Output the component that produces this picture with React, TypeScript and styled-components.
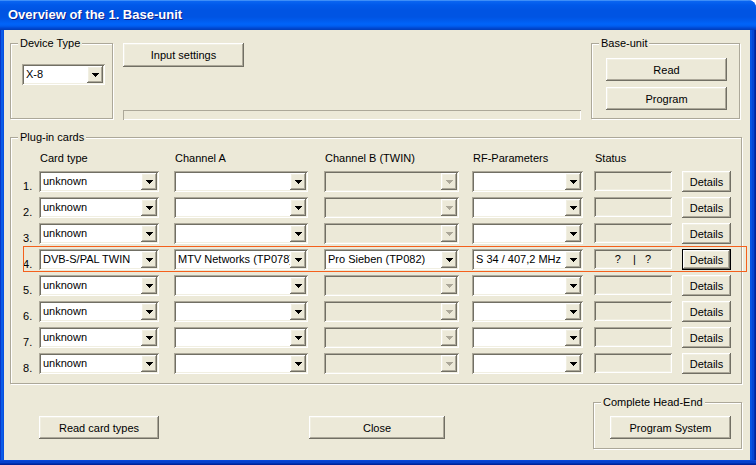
import styled, { createGlobalStyle, css } from "styled-components";

const FACE = "#ECE9D8";
const LIGHT = "#F1EFE2";
const SHADOW = "#ACA899";
const DARK = "#716F64";

const GlobalStyle = createGlobalStyle`
  html, body {
    margin: 0;
    padding: 0;
    background: #ffffff;
  }
  body {
    font-family: "Liberation Sans", Arial, sans-serif;
    font-size: 11px;
    color: #000;
  }
  * {
    box-sizing: border-box;
  }
`;

const raised = css`
  box-shadow: inset -1px -1px ${DARK}, inset 1px 1px #fff,
    inset -2px -2px ${SHADOW}, inset 2px 2px ${LIGHT};
`;

const sunken = css`
  box-shadow: inset 1px 1px ${SHADOW}, inset -1px -1px #fff,
    inset 2px 2px ${DARK}, inset -2px -2px ${LIGHT};
`;

const Window = styled.div`
  width: 756px;
  height: 465px;
  display: flex;
  flex-direction: column;
  overflow: hidden;
  border-top-right-radius: 8px;
  background: #0650e0;
`;

const TitleBar = styled.div`
  height: 30px;
  flex: none;
  display: flex;
  align-items: center;
  padding: 0 0 1px 8px;
  color: #fff;
  font-size: 13px;
  font-weight: bold;
  text-shadow: 1px 1px #0a1e8c;
  background: linear-gradient(
    to bottom,
    #3d8ef8 0px,
    #3d8ef8 1px,
    #0a66f2 1px,
    #0059ea 5px,
    #0054e3 10px,
    #0054e3 17px,
    #005aec 20px,
    #0064fa 24px,
    #005ef0 26px,
    #0049d4 28px,
    #003db8 30px
  );
`;

const FrameBody = styled.div`
  height: 430px;
  flex: none;
  display: flex;
`;

const LeftEdge = styled.div`
  flex: none;
  width: 4px;
  background: linear-gradient(to right, #0838c8 0 1px, #0a5ce8 1px 3px, #0650e0 3px);
`;

const RightEdge = styled.div`
  flex: none;
  width: 6px;
  background: linear-gradient(
    to right,
    #0652e2 0 2px,
    #0444d4 2px 4px,
    #0030b0 4px 5px,
    #00229a 5px
  );
`;

const BottomEdge = styled.div`
  flex: none;
  height: 5px;
  background: linear-gradient(
    to bottom,
    #0847d8 0 1px,
    #0640cc 1px 3px,
    #0030b0 3px 4px,
    #00229a 4px
  );
`;

const Client = styled.main`
  flex: none;
  width: 746px;
  background: ${FACE};
  display: flex;
  flex-direction: column;
  padding: 13px 8px 0 6px;
`;

const TopRow = styled.div`
  display: flex;
  gap: 10px;
  height: 77px;
`;

const GroupBox = styled.section<{ $width?: number; $height?: number }>`
  position: relative;
  flex: none;
  width: ${(p) => (p.$width ? `${p.$width - 1}px` : "auto")};
  height: ${(p) => (p.$height ? `${p.$height - 1}px` : "auto")};
  border: 1px solid ${SHADOW};
  box-shadow: inset 1px 1px #fff, 1px 1px #fff;
`;

const GroupCaption = styled.span`
  position: absolute;
  top: -7px;
  left: 7px;
  padding: 0 2px;
  line-height: 13px;
  background: ${FACE};
  white-space: nowrap;
`;

const DeviceGroup = styled(GroupBox)`
  padding: 20px 0 0 11px;
`;

const MiddleColumn = styled.div`
  flex: none;
  width: 458px;
  display: flex;
  flex-direction: column;
  justify-content: space-between;
`;

const ProgressField = styled.div`
  height: 10px;
  box-shadow: inset 1px 1px ${SHADOW}, inset -1px -1px #fff;
`;

const ButtonStack = styled(GroupBox)`
  display: flex;
  flex-direction: column;
  gap: 6px;
  padding: 14px 0 0 14px;
`;

const Button = styled.button<{ $width: number; $height?: number; $default?: boolean }>`
  flex: none;
  width: ${(p) => p.$width}px;
  height: ${(p) => p.$height ?? 23}px;
  padding: 0;
  border: none;
  background: ${FACE};
  font: inherit;
  color: #000;
  text-align: center;
  ${(p) =>
    p.$default
      ? css`
          box-shadow: inset 0 0 0 1px #000, inset -2px -2px ${DARK},
            inset 2px 2px #fff, inset -3px -3px ${SHADOW}, inset 3px 3px ${LIGHT};
        `
      : raised}
`;

const PluginGroup = styled(GroupBox)`
  margin-top: 17px;
  height: 247px;
  padding: 14px 0 0 12px;
  display: flex;
  flex-direction: column;
`;

const HeaderRow = styled.div`
  display: flex;
  height: 13px;
  line-height: 13px;
  margin-bottom: 6px;
`;

const CardRow = styled.div<{ $selected?: boolean }>`
  position: relative;
  display: flex;
  height: 21px;
  margin-bottom: 5px;
  ${(p) =>
    p.$selected &&
    css`
      &::after {
        content: "";
        position: absolute;
        left: 0;
        right: -6px;
        top: -3px;
        bottom: -2px;
        border: 1px solid #f4601c;
        pointer-events: none;
      }
    `}
`;

const Cell = styled.div<{ $w: number; $gap?: number }>`
  flex: none;
  width: ${(p) => p.$w}px;
  margin-left: ${(p) => p.$gap ?? 0}px;
  white-space: nowrap;
`;

const HeaderLabel = styled(Cell)`
  padding-left: 1px;
`;

const RowNumber = styled(Cell)`
  align-self: flex-end;
  line-height: 13px;
  margin-bottom: -1px;
`;

const Combo = styled.div<{ $disabled?: boolean }>`
  width: 100%;
  height: 21px;
  display: flex;
  align-items: center;
  padding: 2px;
  background: ${(p) => (p.$disabled ? FACE : "#fff")};
  ${sunken}
`;

const ComboText = styled.span`
  flex: 1;
  min-width: 0;
  overflow: hidden;
  white-space: nowrap;
  padding-left: 2px;
  line-height: 17px;
`;

const DropButton = styled.span`
  flex: none;
  width: 16px;
  height: 17px;
  display: flex;
  align-items: center;
  justify-content: center;
  background: ${FACE};
  ${raised}
`;

const StatusField = styled.div`
  width: 100%;
  height: 20px;
  display: flex;
  align-items: center;
  justify-content: center;
  white-space: pre;
  background: ${FACE};
  ${sunken}
`;

const BottomRow = styled.div`
  display: flex;
  align-items: flex-start;
  margin-top: 18px;
`;

const BottomButtons = styled.div`
  display: flex;
  gap: 150px;
  padding: 14px 0 0 29px;
`;

const HeadEndGroup = styled(GroupBox)`
  margin-left: auto;
  padding: 13px 0 0 16px;
`;

function ComboBox({ value = "", disabled }: { value?: string; disabled?: boolean }) {
  return (
    <Combo $disabled={disabled}>
      <ComboText>{value}</ComboText>
      <DropButton>
        <svg width="7" height="4" viewBox="0 0 7 4" shapeRendering="crispEdges">
          <path
            d="M0 0h7v1H0z M1 1h5v1H1z M2 2h3v1H2z M3 3h1v1H3z"
            fill={disabled ? SHADOW : "#000"}
          />
        </svg>
      </DropButton>
    </Combo>
  );
}

type CardSlot = {
  card: string;
  channelA?: string;
  channelB?: string;
  rf?: string;
  status?: string;
  twin?: boolean;
};

const slots: CardSlot[] = [
  { card: "unknown" },
  { card: "unknown" },
  { card: "unknown" },
  {
    card: "DVB-S/PAL TWIN",
    channelA: "MTV Networks (TP078)",
    channelB: "Pro Sieben (TP082)",
    rf: "S 34 / 407,2 MHz",
    status: "?    |   ?",
    twin: true,
  },
  { card: "unknown" },
  { card: "unknown" },
  { card: "unknown" },
  { card: "unknown" },
];

const COL = {
  num: { w: 16, gap: 0 },
  card: { w: 120, gap: 0 },
  chA: { w: 134, gap: 15 },
  chB: { w: 135, gap: 16 },
  rf: { w: 111, gap: 13 },
  status: { w: 78, gap: 11 },
  details: { w: 49, gap: 10 },
};

export default function App() {
  return (
    <Window>
      <GlobalStyle />
      <TitleBar>Overview of the 1. Base-unit</TitleBar>
      <FrameBody>
        <LeftEdge />
        <Client>
          <TopRow>
            <DeviceGroup $width={104} $height={77}>
              <GroupCaption>Device Type</GroupCaption>
              <Cell $w={83}>
                <ComboBox value="X-8" />
              </Cell>
            </DeviceGroup>
            <MiddleColumn>
              <Button $width={121} $height={24}>
                Input settings
              </Button>
              <ProgressField />
            </MiddleColumn>
            <ButtonStack $width={150} $height={77}>
              <GroupCaption>Base-unit</GroupCaption>
              <Button $width={121}>Read</Button>
              <Button $width={121}>Program</Button>
            </ButtonStack>
          </TopRow>

          <PluginGroup>
            <GroupCaption>Plug-in cards</GroupCaption>
            <HeaderRow>
              <HeaderLabel $w={COL.num.w} />
              <HeaderLabel $w={COL.card.w}>Card type</HeaderLabel>
              <HeaderLabel $w={COL.chA.w} $gap={COL.chA.gap}>
                Channel A
              </HeaderLabel>
              <HeaderLabel $w={COL.chB.w} $gap={COL.chB.gap}>
                Channel B (TWIN)
              </HeaderLabel>
              <HeaderLabel $w={COL.rf.w} $gap={COL.rf.gap}>
                RF-Parameters
              </HeaderLabel>
              <HeaderLabel $w={COL.status.w} $gap={COL.status.gap}>
                Status
              </HeaderLabel>
            </HeaderRow>
            {slots.map((slot, i) => (
              <CardRow key={i} $selected={slot.twin}>
                <RowNumber $w={COL.num.w}>{i + 1}.</RowNumber>
                <Cell $w={COL.card.w}>
                  <ComboBox value={slot.card} />
                </Cell>
                <Cell $w={COL.chA.w} $gap={COL.chA.gap}>
                  <ComboBox value={slot.channelA} />
                </Cell>
                <Cell $w={COL.chB.w} $gap={COL.chB.gap}>
                  <ComboBox value={slot.channelB} disabled={!slot.twin} />
                </Cell>
                <Cell $w={COL.rf.w} $gap={COL.rf.gap}>
                  <ComboBox value={slot.rf} />
                </Cell>
                <Cell $w={COL.status.w} $gap={COL.status.gap}>
                  <StatusField>{slot.status}</StatusField>
                </Cell>
                <Cell $w={COL.details.w} $gap={COL.details.gap}>
                  <Button $width={COL.details.w} $height={21} $default={slot.twin}>
                    Details
                  </Button>
                </Cell>
              </CardRow>
            ))}
          </PluginGroup>

          <BottomRow>
            <BottomButtons>
              <Button $width={120}>Read card types</Button>
              <Button $width={136}>Close</Button>
            </BottomButtons>
            <HeadEndGroup $width={150} $height={48}>
              <GroupCaption>Complete Head-End</GroupCaption>
              <Button $width={121}>Program System</Button>
            </HeadEndGroup>
          </BottomRow>
        </Client>
        <RightEdge />
      </FrameBody>
      <BottomEdge />
    </Window>
  );
}
